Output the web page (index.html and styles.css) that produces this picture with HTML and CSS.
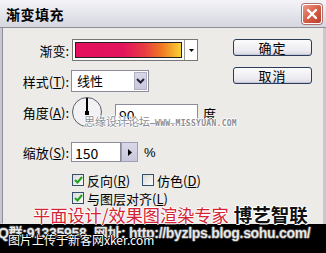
FILE: index.html
```html
<!DOCTYPE html>
<html>
<head>
  <meta charset="utf-8">
  <link rel="stylesheet" href="styles.css">
</head>
<body>
  <div class="window">
    <div class="titlebar">
      <div class="title">渐变填充</div>
      <div class="close">
        <svg width="12" height="12" viewBox="0 0 12 12"><path d="M2 2 L10 10 M10 2 L2 10" stroke="#fff" stroke-width="2.4" stroke-linecap="round"/></svg>
      </div>
    </div>

    <div class="client">
      <div class="form">
        <div class="row row-gradient">
          <div class="label">渐变:</div>
          <div class="swatch">
            <div class="swatch-fill"></div>
            <div class="swatch-arrow">
              <svg width="5" height="3" viewBox="0 0 5 3"><path d="M0 0 H5 L2.5 3 Z" fill="#000"/></svg>
            </div>
          </div>
        </div>

        <div class="row row-style">
          <div class="label">样式(<u>T</u>):</div>
          <div class="select">
            <span class="select-text">线性</span>
            <div class="select-btn">
              <svg width="9" height="6" viewBox="0 0 9 6"><path d="M1 1 L4.5 4.5 L8 1" stroke="#223" stroke-width="2" fill="none"/></svg>
            </div>
          </div>
        </div>

        <div class="row row-angle">
          <div class="label">角度(<u>A</u>):</div>
          <div class="dial">
            <div class="dial-hand"></div>
            <div class="dial-dot"></div>
          </div>
          <div class="input input-angle">90</div>
          <div class="unit">度</div>
        </div>

        <div class="row row-scale">
          <div class="label">缩放(<u>S</u>):</div>
          <div class="input input-scale">150</div>
          <div class="spin-btn">
            <svg width="4" height="7" viewBox="0 0 4 7"><path d="M0 0 L4 3.5 L0 7 Z" fill="#000"/></svg>
          </div>
          <div class="unit unit-pct">%</div>
        </div>

        <div class="row row-check">
          <div class="check checked">
            <svg width="9" height="8" viewBox="0 0 9 8"><path d="M1 4 L3.5 6.5 L8 1" stroke="#21a121" stroke-width="2" fill="none"/></svg>
          </div>
          <div class="check-label">反向(<u>R</u>)</div>
          <div class="check check-gap"></div>
          <div class="check-label">仿色(<u>D</u>)</div>
        </div>

        <div class="row row-check row-check2">
          <div class="check checked">
            <svg width="9" height="8" viewBox="0 0 9 8"><path d="M1 4 L3.5 6.5 L8 1" stroke="#21a121" stroke-width="2" fill="none"/></svg>
          </div>
          <div class="check-label">与图层对齐(<u>L</u>)</div>
        </div>
      </div>

      <div class="buttons">
        <div class="button">确定</div>
        <div class="button">取消</div>
      </div>
    </div>
  </div>

  <!-- watermarks laid over the screenshot -->
  <div class="mark-site">思缘设计论坛<span class="mark-url">—WWW.MISSYUAN.COM</span></div>
  <div class="mark-banner">
    <span class="mark-red">平面设计/效果图渲染专家</span>
    <span class="mark-black">博艺智联</span>
  </div>

  <div class="strip">
    <div class="strip-text">Q群:91335958&nbsp; 网址: http://byzlps.blog.sohu.com/</div>
    <div class="strip-upload">图片上传于新客网xker.com</div>
  </div>
</body>
</html>
```

FILE: styles.css
```css
:root {
  --face: #ecebe8;
  --frame: #c8c8d0;
  --edge: #8e8e98;
  --field-border: #8c8c98;
  --btn-lavender: #c9c9dc;
  --font-cjk: "Noto Sans CJK SC", "Noto Sans", sans-serif;
}

html, body {
  margin: 0;
  padding: 0;
}

body {
  position: relative;
  width: 326px;
  height: 253px;
  overflow: hidden;
  background: #000;
  font-family: var(--font-cjk);
  font-size: 13px;
  color: #000;
}

.window {
  height: 224px;
  background: var(--face);
  border-left: 3px solid var(--frame);
  border-right: 3px solid var(--frame);
  box-sizing: border-box;
}

.titlebar {
  height: 28px;
  display: flex;
  align-items: center;
  justify-content: space-between;
  padding: 0 1px 0 3px;
  margin: 0 -3px;
  background: linear-gradient(#f4f4f8, #e2e2ea 60%, #d6d6e0);
  border-bottom: 1px solid var(--edge);
  box-sizing: border-box;
}

.title {
  font-weight: bold;
  font-size: 14px;
  line-height: 1;
  letter-spacing: 0.5px;
  padding-left: 3px;
}

.close {
  width: 20px;
  height: 20px;
  margin-right: 3px;
  display: flex;
  align-items: center;
  justify-content: center;
  border: 1px solid #fff;
  border-radius: 3px;
  background: linear-gradient(135deg, #ec9a86, #d45a44 55%, #b8402e);
  box-shadow: 0 0 0 1px #b07070;
  box-sizing: border-box;
}

.client {
  display: flex;
  border-left: 1px solid var(--edge);
  margin-left: -1px;
  height: 195px;
}

.form {
  display: flex;
  flex-direction: column;
  padding-top: 11px;
}

.row {
  display: flex;
  align-items: center;
}

.label {
  width: 66px;
  margin-right: 3px;
  text-align: right;
  white-space: nowrap;
  line-height: 1;
}

/* gradient picker */
.row-gradient {
  height: 22px;
}

.swatch {
  display: flex;
  width: 126px;
  height: 22px;
  border: 1px solid #777;
  background: #fff;
  box-sizing: border-box;
}

.swatch-fill {
  flex: 1;
  margin: 2px;
  border: 1px solid #222;
  background: linear-gradient(90deg, #e4105e, #e2145c 45%, #e83c44 65%, #f07a22 82%, #f8d236);
}

.swatch-arrow {
  width: 12px;
  display: flex;
  align-items: center;
  justify-content: center;
  border-left: 1px solid #999;
}

/* style select */
.row-style {
  height: 22px;
  margin-top: 9px;
}

.select {
  display: flex;
  width: 78px;
  height: 22px;
  margin-left: -1px;
  background: #fff;
  border: 1px solid var(--field-border);
  box-sizing: border-box;
}

.select-text {
  flex: 1;
  padding-left: 5px;
  line-height: 20px;
}

.select-btn {
  width: 13px;
  margin: 1px;
  display: flex;
  align-items: center;
  justify-content: center;
  background: linear-gradient(#d6d6e6, var(--btn-lavender));
  border: 1px solid #b0b0c8;
  box-sizing: border-box;
}

/* angle dial */
.row-angle {
  height: 30px;
  margin-top: 5px;
}

.dial {
  position: relative;
  width: 30px;
  height: 30px;
  border: 1.5px solid #5c5c6c;
  border-radius: 50%;
  background: #f2f2f4;
  box-sizing: border-box;
}

.dial-hand {
  position: absolute;
  left: 13px;
  top: 0;
  width: 1.5px;
  height: 14px;
  background: #000;
}

.dial-dot {
  position: absolute;
  left: 12px;
  top: 12.5px;
  width: 4px;
  height: 4px;
  background: #000;
}

.input {
  height: 20px;
  padding-left: 3px;
  line-height: 20px;
  font-size: 14px;
  background: #fff;
  border: 1px solid var(--field-border);
  box-sizing: border-box;
}

.input-angle {
  width: 83px;
  margin-left: 13px;
  margin-top: 4px;
}

.unit {
  margin-left: 5px;
  margin-top: 2px;
}

/* scale */
.row-scale {
  height: 20px;
  margin-top: 15px;
}

.input-scale {
  width: 50px;
  margin-left: -1px;
}

.spin-btn {
  width: 17px;
  height: 20px;
  display: flex;
  align-items: center;
  justify-content: center;
  background: linear-gradient(#d8d8e8, var(--btn-lavender));
  border: 1px solid #9e9eb8;
  box-sizing: border-box;
}

.unit-pct {
  margin-left: 6px;
  margin-top: 0;
  font-family: "Liberation Sans", sans-serif;
}

/* checkboxes */
.row-check {
  height: 12px;
  margin-top: 12px;
  padding-left: 72px;
  margin-left: -3px;
}

.row-check2 {
  margin-top: 6px;
}

.check {
  width: 12px;
  height: 12px;
  display: flex;
  align-items: center;
  justify-content: center;
  border: 1px solid #33506e;
  background: linear-gradient(135deg, #dcdcd6, #fafafa);
  box-sizing: border-box;
}

.check-gap {
  margin-left: 12px;
}

.check-label {
  margin-left: 3px;
  line-height: 1;
  white-space: nowrap;
}

/* buttons */
.buttons {
  display: flex;
  flex-direction: column;
  gap: 11px;
  margin-left: auto;
  margin-right: 11px;
  padding-top: 11px;
}

.button {
  width: 79px;
  height: 17px;
  line-height: 15px;
  text-align: center;
  font-size: 13px;
  letter-spacing: 1px;
  border: 1px solid #2c3c58;
  border-radius: 3px;
  background: linear-gradient(#fbfbfc, #ecebf0 70%, #d8d8e4);
  box-shadow: inset 0 -1px 0 #c8c8dc;
  box-sizing: border-box;
}

/* watermarks */
.mark-site {
  position: absolute;
  left: 84px;
  top: 114px;
  font-size: 11px;
  line-height: 14px;
  color: #8c8c92;
  white-space: nowrap;
  text-shadow: 1px 0 #fff, -1px 0 #fff, 0 1px #fff, 0 -1px #fff;
}

.mark-url {
  font-family: "DejaVu Sans Mono", monospace;
  font-size: 8px;
  font-weight: bold;
  letter-spacing: 0.3px;
}

.mark-banner {
  position: absolute;
  left: 33px;
  top: 205px;
  display: flex;
  align-items: center;
  white-space: nowrap;
  line-height: 19px;
}

.mark-red {
  font-size: 17.2px;
  color: #d42434;
  text-shadow: 1px 0 #fff, -1px 0 #fff, 0 1px #fff, 0 -1px #fff;
}

.mark-black {
  margin-left: 5px;
  font-size: 18.5px;
  font-weight: bold;
  color: #111;
  text-shadow: 1px 0 #fff, -1px 0 #fff, 0 1px #fff, 0 -1px #fff, 1px 1px #fff, -1px -1px #fff;
}

.strip {
  position: relative;
  height: 29px;
}

.strip-text {
  position: absolute;
  left: -2px;
  top: 0;
  font-family: "Liberation Sans", "Noto Sans CJK SC", sans-serif;
  font-size: 14px;
  line-height: 18px;
  font-weight: bold;
  letter-spacing: -0.3px;
  white-space: nowrap;
  color: #e8e8e8;
  text-shadow: 1px 0 #444, -1px 0 #444, 0 1px #444, 0 -1px #444;
}

.strip-upload {
  position: absolute;
  left: 8px;
  top: 8px;
  font-size: 12px;
  line-height: 16px;
  white-space: nowrap;
  color: #fff;
  text-shadow: 1px 0 #000, -1px 0 #000, 0 1px #000, 0 -1px #000, 1px 1px #000;
}
```
